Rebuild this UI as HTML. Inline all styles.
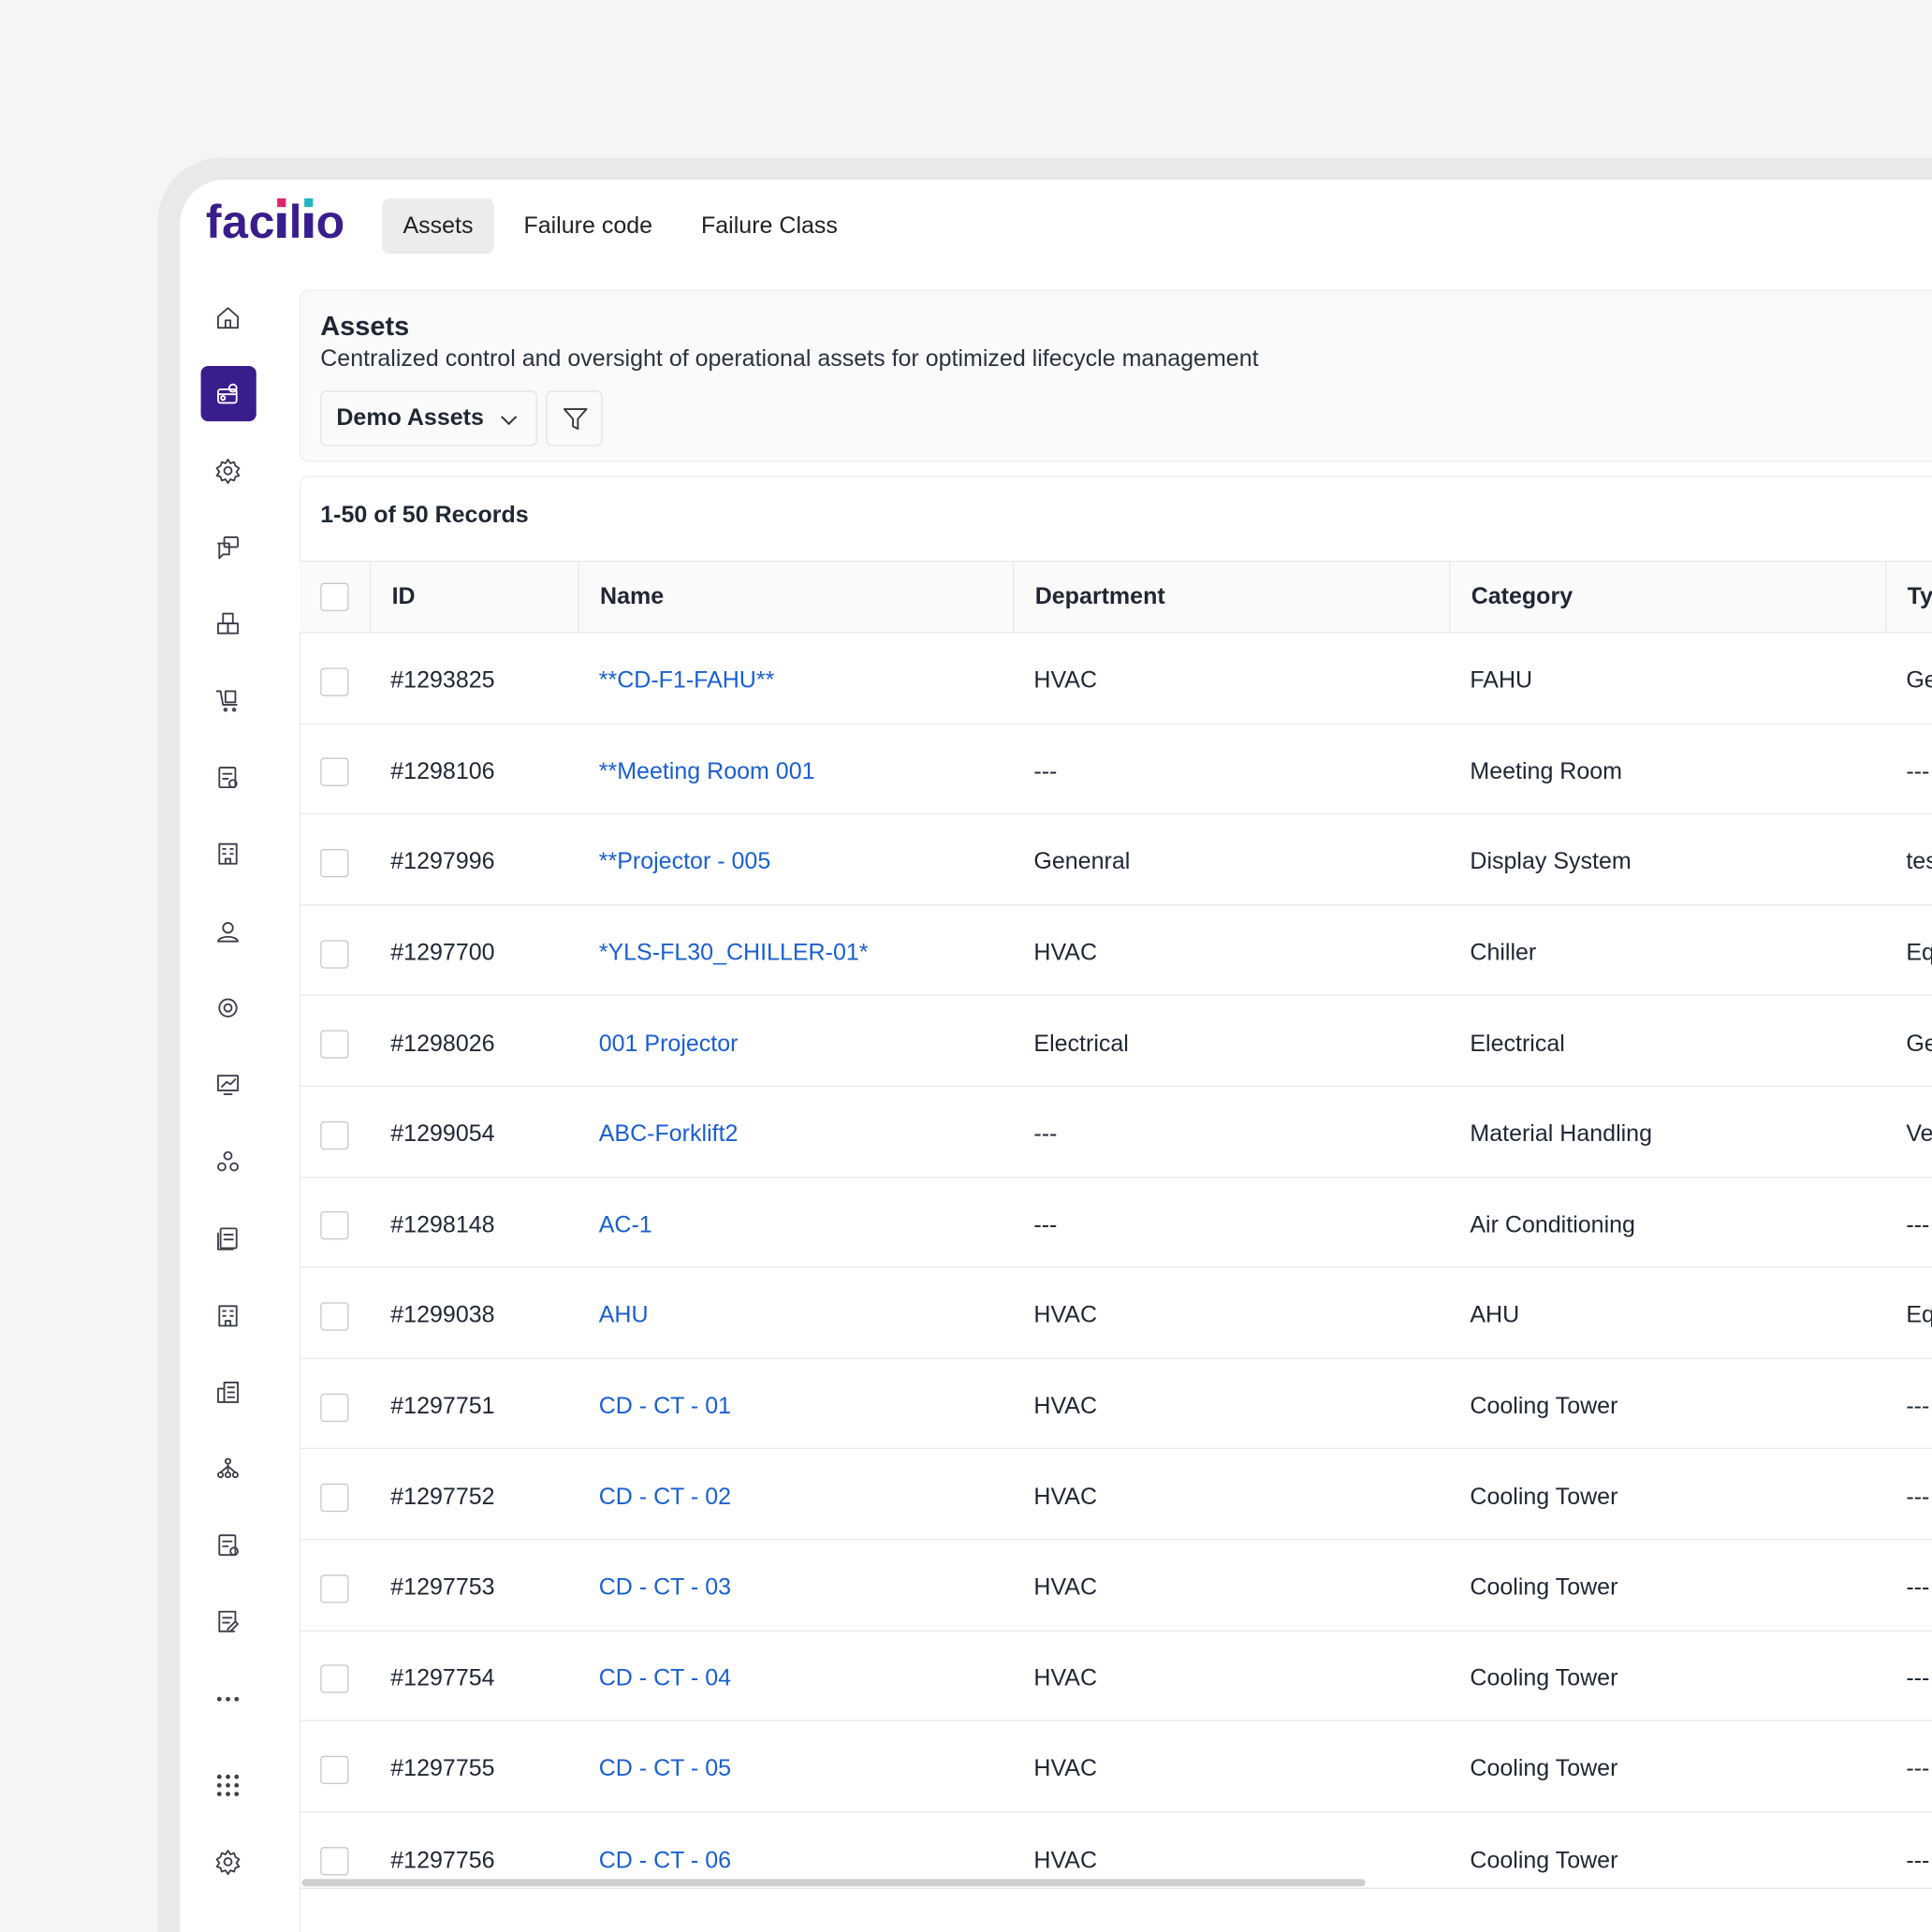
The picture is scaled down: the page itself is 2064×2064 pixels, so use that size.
<!DOCTYPE html>
<html><head><meta charset="utf-8"><style>
*{box-sizing:border-box;margin:0;padding:0}
html,body{width:2064px;height:2064px;overflow:hidden;background:#f5f5f5;font-family:"Liberation Sans",sans-serif;color:#1f2733}
#clip{position:absolute;left:0;top:0;width:2064px;height:2064px;overflow:hidden}
#s{position:absolute;left:0;top:0;width:1568px;height:1568px;overflow:hidden;transform:scale(1.316327);transform-origin:0 0}
.frame{position:absolute;left:128px;top:128px;width:1440px;height:1440px;background:#e9e9e9;border-radius:52px 0 0 0}
.card{position:absolute;left:146px;top:146px;width:1422px;height:1422px;background:#fff;border-radius:36px 0 0 0}
.logo{position:absolute;left:167px;top:160px;font-size:38px;font-weight:bold;color:#3a1d8c;letter-spacing:0.5px;white-space:nowrap}
.ii{display:inline-block;position:relative;width:7px;height:20px;background:#3a1d8c;margin:0 2px;vertical-align:baseline}
.ii span{position:absolute;left:0;top:-12px;width:7px;height:7px}
.tab{position:absolute;top:161px;height:45px;line-height:45px;font-size:19px;color:#222;padding:0 17px}
.tab.on{background:#ececec;border-radius:6px}
.hdr{position:absolute;left:243px;top:235px;width:1325px;height:140px;background:#fafafa;border:1px solid #ececec;border-right:none;border-radius:8px 0 0 8px}
.t1{position:absolute;left:260px;top:252px;font-size:22px;font-weight:bold}
.t2{position:absolute;left:260px;top:281px;font-size:19px;color:#2b3340}
.dd{position:absolute;left:260px;top:317px;width:176px;height:45px;border:1px solid #e3e3e3;border-radius:5px;background:#fafafa;font-size:19px;font-weight:bold;line-height:43px;padding-left:12px}
.fb{position:absolute;left:443px;top:317px;width:46px;height:45px;border:1px solid #e3e3e3;border-radius:5px;background:#fafafa}
.tbl{position:absolute;left:243px;top:386px;width:1325px;height:1182px;background:#fff;border:1px solid #ececec;border-right:none;border-bottom:none;border-radius:8px 0 0 0;overflow:hidden}
.rec{position:absolute;left:260px;top:408px;font-size:19px;font-weight:bold}
.row{position:absolute;left:243px;width:1325px;height:73.6px;border-bottom:1px solid #e8e8e8;font-size:19px}
.row div{position:absolute;top:0;height:100%;display:flex;align-items:center;padding-top:6px}
.head{top:455px;height:59px;background:#fafafa;border-top:1px solid #e8e8e8;font-weight:bold}
.head div{padding-top:0}
.head .sep{border-left:1px solid #e8e8e8}
.cb{width:23px;height:23px;border:1.5px solid #c8c8c8;border-radius:3px;background:#fff}
a{color:#1a5fd0;text-decoration:none}
.ic{position:absolute;left:174px;width:22px;height:22px}
.ic svg{width:22px;height:22px;fill:none;stroke:#3a3f48;stroke-width:1.4;stroke-linecap:round;stroke-linejoin:round}
.act{position:absolute;left:163px;top:297px;width:45px;height:45px;background:#3a1d8c;border-radius:6px}
.scroll{position:absolute;left:245px;top:1525px;width:863px;height:6px;background:#cfcfcf;border-radius:3px}
.bl{position:absolute;left:243px;top:1532px;width:1325px;height:1px;background:#e8e8e8}
.wb{position:absolute;left:244px;top:1533px;width:1324px;height:35px;background:#fff}
</style></head><body><div id="clip"><div id="s">
<div class="frame"></div><div class="card"></div>
<div class="logo">fac<span class="ii"><span style="background:#e0246a"></span></span>l<span class="ii"><span style="background:#22b5c4"></span></span>o</div>
<div class="tab on" style="left:310px">Assets</div>
<div class="tab" style="left:408px">Failure code</div>
<div class="tab" style="left:552px">Failure Class</div>

<div class="act"></div>
<div class="ic" style="top:247px"><svg viewBox="0 0 22 22"><path d="M3 10L11 3l8 7v9H3z M9 19v-6h4v6"/></svg></div>
<div class="ic" style="top:309px"><svg viewBox="0 0 22 22" style="stroke:#fff"><rect x="3" y="7" width="15" height="11" rx="2"/><circle cx="7" cy="14" r="1.6"/><circle cx="15" cy="6" r="3"/><path d="M3 11h15"/></svg></div>
<div class="ic" style="top:371px"><svg viewBox="0 0 22 22"><circle cx="11" cy="11" r="3"/><path d="M11 2l2 3 3-1 1 3 3 2-2 3 2 3-3 1-1 3-3-1-2 3-2-3-3 1-1-3-3-1 2-3-2-3 3-2 1-3 3 1z"/></svg></div>
<div class="ic" style="top:433px"><svg viewBox="0 0 22 22"><rect x="8" y="3" width="11" height="8" rx="1"/><path d="M3 8h9v9H7l-3 3V8z"/></svg></div>
<div class="ic" style="top:495px"><svg viewBox="0 0 22 22"><rect x="3" y="11" width="8" height="8"/><rect x="11" y="11" width="8" height="8"/><rect x="7" y="3" width="8" height="8"/></svg></div>
<div class="ic" style="top:557px"><svg viewBox="0 0 22 22"><path d="M2 4h3l2 11h11"/><rect x="9" y="4" width="8" height="9"/><circle cx="9" cy="19" r="1"/><circle cx="16" cy="19" r="1"/></svg></div>
<div class="ic" style="top:620px"><svg viewBox="0 0 22 22"><rect x="4" y="3" width="13" height="16" rx="1"/><path d="M7 8h7M7 12h4"/><circle cx="15" cy="16" r="3"/></svg></div>
<div class="ic" style="top:682px"><svg viewBox="0 0 22 22"><rect x="4" y="3" width="14" height="16"/><path d="M7 7h2M13 7h2M7 11h2M13 11h2M9 19v-4h4v4"/></svg></div>
<div class="ic" style="top:745px"><svg viewBox="0 0 22 22"><circle cx="11" cy="8" r="4"/><path d="M3 19c1-5 15-5 16 0z"/></svg></div>
<div class="ic" style="top:807px"><svg viewBox="0 0 22 22"><circle cx="11" cy="11" r="3"/><circle cx="11" cy="11" r="7"/></svg></div>
<div class="ic" style="top:869px"><svg viewBox="0 0 22 22"><rect x="3" y="4" width="16" height="12"/><path d="M6 13l4-4 3 2 4-4M8 19h6"/></svg></div>
<div class="ic" style="top:932px"><svg viewBox="0 0 22 22"><circle cx="11" cy="6" r="3"/><circle cx="6" cy="15" r="3"/><circle cx="16" cy="15" r="3"/></svg></div>
<div class="ic" style="top:994px"><svg viewBox="0 0 22 22"><rect x="5" y="3" width="13" height="16" rx="1"/><path d="M3 7v13h12M8 8h7M8 12h7"/></svg></div>
<div class="ic" style="top:1057px"><svg viewBox="0 0 22 22"><rect x="4" y="3" width="14" height="16"/><path d="M7 7h2M13 7h2M7 11h2M13 11h2M9 19v-4h4v4"/></svg></div>
<div class="ic" style="top:1119px"><svg viewBox="0 0 22 22"><rect x="8" y="3" width="11" height="16"/><rect x="3" y="8" width="5" height="11"/><path d="M11 7h5M11 11h5M11 15h5"/></svg></div>
<div class="ic" style="top:1181px"><svg viewBox="0 0 22 22"><circle cx="11" cy="5" r="2"/><circle cx="5" cy="16" r="2"/><circle cx="11" cy="16" r="2"/><circle cx="17" cy="16" r="2"/><path d="M11 7v7M5 14l6-5 6 5"/></svg></div>
<div class="ic" style="top:1243px"><svg viewBox="0 0 22 22"><rect x="4" y="3" width="13" height="16" rx="1"/><path d="M7 8h7M7 12h4"/><circle cx="16" cy="16" r="3"/></svg></div>
<div class="ic" style="top:1305px"><svg viewBox="0 0 22 22"><path d="M16 19H4V3h13v8M7 8h7M7 12h5M13 19l6-6-2-2-6 6v2z"/></svg></div>
<div class="ic" style="top:1368px"><svg viewBox="0 0 22 22" style="fill:#3a3f48;stroke:none"><circle cx="4" cy="11" r="1.8"/><circle cx="11" cy="11" r="1.8"/><circle cx="18" cy="11" r="1.8"/></svg></div>
<div class="ic" style="top:1438px"><svg viewBox="0 0 22 22" style="fill:#3a3f48;stroke:none"><circle cx="4" cy="4" r="1.8"/><circle cx="11" cy="4" r="1.8"/><circle cx="18" cy="4" r="1.8"/><circle cx="4" cy="11" r="1.8"/><circle cx="11" cy="11" r="1.8"/><circle cx="18" cy="11" r="1.8"/><circle cx="4" cy="18" r="1.8"/><circle cx="11" cy="18" r="1.8"/><circle cx="18" cy="18" r="1.8"/></svg></div>
<div class="ic" style="top:1500px"><svg viewBox="0 0 22 22"><circle cx="11" cy="11" r="3"/><path d="M11 2l2 3 3-1 1 3 3 2-2 3 2 3-3 1-1 3-3-1-2 3-2-3-3 1-1-3-3-1 2-3-2-3 3-2 1-3 3 1z"/></svg></div>

<div class="hdr"></div>
<div class="t1">Assets</div>
<div class="t2">Centralized control and oversight of operational assets for optimized lifecycle management</div>
<div class="dd">Demo Assets <svg style="position:absolute;left:145px;top:18px" width="14" height="10" viewBox="0 0 14 10"><path d="M1 2l6 6 6-6" fill="none" stroke="#333" stroke-width="1.5"/></svg></div>
<div class="fb"><svg style="position:absolute;left:12px;top:11px" width="22" height="22" viewBox="0 0 22 22"><path d="M2 3h18l-7 8v8l-4-2v-6z" fill="none" stroke="#333" stroke-width="1.4" stroke-linejoin="round"/></svg></div>

<div class="tbl"></div>
<div class="rec">1-50 of 50 Records</div>
<div class="row head">
<div style="left:17px"><span class="cb"></span></div>
<div class="sep" style="left:57px;padding-left:17px;width:169px">ID</div>
<div class="sep" style="left:226px;padding-left:17px;width:353px">Name</div>
<div class="sep" style="left:579px;padding-left:17px;width:354px">Department</div>
<div class="sep" style="left:933px;padding-left:17px;width:354px">Category</div>
<div class="sep" style="left:1287px;padding-left:17px;width:200px">Type</div>
</div>
<div class="row" style="top:514px"><div style="left:17px"><span class="cb"></span></div><div style="left:74px">#1293825</div><div style="left:243px"><a>**CD-F1-FAHU**</a></div><div style="left:596px">HVAC</div><div style="left:950px">FAHU</div><div style="left:1304px">Generic</div></div>
<div class="row" style="top:587.6px"><div style="left:17px"><span class="cb"></span></div><div style="left:74px">#1298106</div><div style="left:243px"><a>**Meeting Room 001</a></div><div style="left:596px">---</div><div style="left:950px">Meeting Room</div><div style="left:1304px">---</div></div>
<div class="row" style="top:661.2px"><div style="left:17px"><span class="cb"></span></div><div style="left:74px">#1297996</div><div style="left:243px"><a>**Projector - 005</a></div><div style="left:596px">Genenral</div><div style="left:950px">Display System</div><div style="left:1304px">test</div></div>
<div class="row" style="top:734.8px"><div style="left:17px"><span class="cb"></span></div><div style="left:74px">#1297700</div><div style="left:243px"><a>*YLS-FL30_CHILLER-01*</a></div><div style="left:596px">HVAC</div><div style="left:950px">Chiller</div><div style="left:1304px">Equipment</div></div>
<div class="row" style="top:808.4px"><div style="left:17px"><span class="cb"></span></div><div style="left:74px">#1298026</div><div style="left:243px"><a>001 Projector</a></div><div style="left:596px">Electrical</div><div style="left:950px">Electrical</div><div style="left:1304px">Generic</div></div>
<div class="row" style="top:882px"><div style="left:17px"><span class="cb"></span></div><div style="left:74px">#1299054</div><div style="left:243px"><a>ABC-Forklift2</a></div><div style="left:596px">---</div><div style="left:950px">Material Handling</div><div style="left:1304px">Vehicle</div></div>
<div class="row" style="top:955.6px"><div style="left:17px"><span class="cb"></span></div><div style="left:74px">#1298148</div><div style="left:243px"><a>AC-1</a></div><div style="left:596px">---</div><div style="left:950px">Air Conditioning</div><div style="left:1304px">---</div></div>
<div class="row" style="top:1029.2px"><div style="left:17px"><span class="cb"></span></div><div style="left:74px">#1299038</div><div style="left:243px"><a>AHU</a></div><div style="left:596px">HVAC</div><div style="left:950px">AHU</div><div style="left:1304px">Equipment</div></div>
<div class="row" style="top:1102.8px"><div style="left:17px"><span class="cb"></span></div><div style="left:74px">#1297751</div><div style="left:243px"><a>CD - CT - 01</a></div><div style="left:596px">HVAC</div><div style="left:950px">Cooling Tower</div><div style="left:1304px">---</div></div>
<div class="row" style="top:1176.4px"><div style="left:17px"><span class="cb"></span></div><div style="left:74px">#1297752</div><div style="left:243px"><a>CD - CT - 02</a></div><div style="left:596px">HVAC</div><div style="left:950px">Cooling Tower</div><div style="left:1304px">---</div></div>
<div class="row" style="top:1250px"><div style="left:17px"><span class="cb"></span></div><div style="left:74px">#1297753</div><div style="left:243px"><a>CD - CT - 03</a></div><div style="left:596px">HVAC</div><div style="left:950px">Cooling Tower</div><div style="left:1304px">---</div></div>
<div class="row" style="top:1323.6px"><div style="left:17px"><span class="cb"></span></div><div style="left:74px">#1297754</div><div style="left:243px"><a>CD - CT - 04</a></div><div style="left:596px">HVAC</div><div style="left:950px">Cooling Tower</div><div style="left:1304px">---</div></div>
<div class="row" style="top:1397.2px"><div style="left:17px"><span class="cb"></span></div><div style="left:74px">#1297755</div><div style="left:243px"><a>CD - CT - 05</a></div><div style="left:596px">HVAC</div><div style="left:950px">Cooling Tower</div><div style="left:1304px">---</div></div>
<div class="row" style="top:1470.8px;border-bottom:none"><div style="left:17px"><span class="cb"></span></div><div style="left:74px">#1297756</div><div style="left:243px"><a>CD - CT - 06</a></div><div style="left:596px">HVAC</div><div style="left:950px">Cooling Tower</div><div style="left:1304px">---</div></div>
<div class="wb"></div>
<div class="scroll"></div>
<div class="bl"></div>
</div></div>
</body></html>
